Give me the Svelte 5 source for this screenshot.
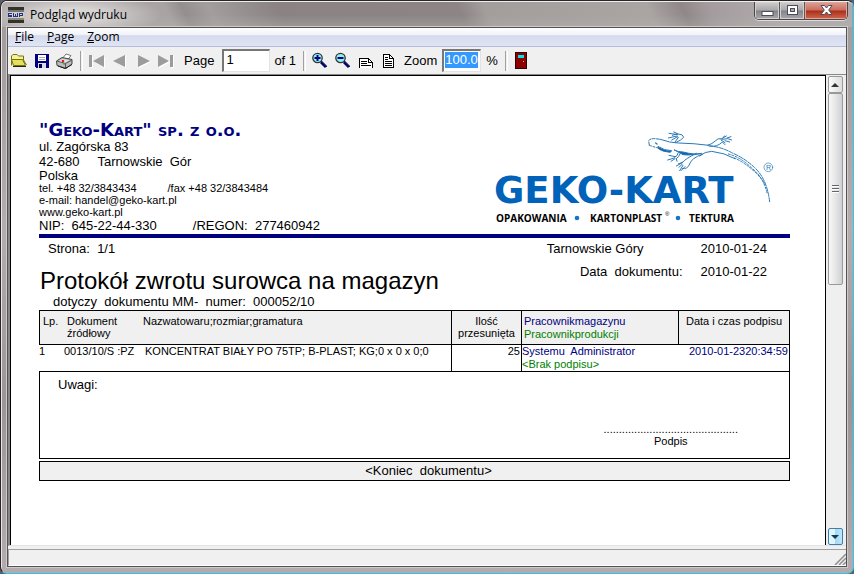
<script>
  let page = $state('1');
  let zoom = $state('100.0');
</script>

<div class="window">
  <header class="titlebar">
    <svg class="appicon" width="16" height="16" viewBox="0 0 16 16" shape-rendering="crispEdges" aria-hidden="true">
      <rect width="16" height="16" fill="#8c8a78" />
      <rect width="16" height="3" fill="#33332b" />
      <rect y="3" width="16" height="2" fill="#77766a" />
      <rect y="5" width="16" height="6" fill="#d2d0bd" />
      <rect y="13" width="16" height="3" fill="#33332b" />
      <path d="M0 6H4V7H1V8H4V10H0V9H3V8.500H0ZM5 6H6V9H7V7H8V9H9V6H10V10H5ZM11 6H15V9H12V10H11ZM12 7V8H14V7Z" fill="#1c2f9c" fill-rule="evenodd" />
    </svg>
    <h1>Podgląd wydruku</h1>
    <div class="caption">
      <button class="min" aria-label="Minimize">
        <svg width="13" height="12" viewBox="0 0 13 12"><rect x="1" y="6.500" width="11" height="4" fill="#fff" stroke="#4b4d5c" /></svg>
      </button>
      <button class="max" aria-label="Maximize">
        <svg width="13" height="12" viewBox="0 0 13 12"><rect x="1.500" y=".5" width="10" height="9" fill="#fff" stroke="#4b4d5c" /><rect x="4.500" y="3.500" width="4" height="3" fill="#a9a9ae" stroke="#4b4d5c" /></svg>
      </button>
      <button class="close" aria-label="Close">
        <svg width="13" height="12" viewBox="0 0 13 12"><path d="M1 .5H4.500L6.500 3L8.500 .5H12L8.700 5L12 9.500H8.500L6.500 7L4.500 9.500H1L4.300 5Z" fill="#fff" stroke="#4b4d5c" /></svg>
      </button>
    </div>
  </header>

  <div class="client">
    <nav class="menu">
      <button><u>F</u>ile</button>
      <button><u>P</u>age</button>
      <button><u>Z</u>oom</button>
    </nav>

    <div class="toolbar">
      <button aria-label="Open">
        <svg width="16" height="16" viewBox="0 0 16 16">
          <path d="M.5 12.500V3L2 1.500H6L7.500 3H12.500V6" fill="#f6f29a" stroke="#77750a" />
          <path d="M2.500 12.500L.5 6.500H11.500L14.500 12.500Z" fill="#e6e060" stroke="#77750a" />
          <path d="M12.500 4V7L15.500 12" fill="none" stroke="#77750a" />
          <path d="M2 13.500H15" stroke="#222" />
        </svg>
      </button>
      <button aria-label="Save">
        <svg width="16" height="16" viewBox="0 0 16 16" shape-rendering="crispEdges">
          <path d="M1 1H15V15H2L1 14Z" fill="#000080" />
          <rect x="4" y="2" width="8" height="6" fill="#fff" />
          <path d="M5 4H11M5 6H11" stroke="#aaa" />
          <rect x="4" y="10" width="8" height="5" fill="#dcdcdc" /><rect x="5" y="11" width="3" height="4" fill="#000050" />
        </svg>
      </button>
      <button aria-label="Print">
        <svg width="17" height="16" viewBox="0 0 17 16">
          <path d="M6 6L10 1L15 2.500L11 8Z" fill="#fff" stroke="#777" />
          <path d="M.5 8L6 4.500L16 6.500V11L10 15.500L1 12.500Z" fill="#bdbdbd" stroke="#444" />
          <path d="M1 8L9.500 10.500L16 7M9.500 10.500V15" fill="none" stroke="#555" />
          <path d="M3 8L7 6L13 7.500L9 9.500Z" fill="#e5e5e5" />
          <circle cx="7" cy="8" r="1.300" fill="#e02020" /><path d="M7 10.500L9 11" stroke="#30b040" stroke-width="1.500" />
          <path d="M2 13L9 15.500L16 11.500" stroke="#222" fill="none" />
        </svg>
      </button>
      <span class="sep"></span>
      <button aria-label="First page">
        <svg width="16" height="14" viewBox="0 0 16 14"><path d="M1 2H3V13H1ZM15 2V13L5 7.500Z" fill="#fff" transform="translate(1 1)" /><path d="M0 1H3V13H0ZM15 1V13L4 7Z" fill="#9c9c9c" /></svg>
      </button>
      <button aria-label="Previous page">
        <svg width="16" height="14" viewBox="0 0 16 14"><path d="M14 2V14L3 8Z" fill="#fff" /><path d="M13 1V13L1 7Z" fill="#9c9c9c" /></svg>
      </button>
      <button aria-label="Next page">
        <svg width="16" height="14" viewBox="0 0 16 14"><path d="M4 2V14L16 8Z" fill="#fff" /><path d="M3 1V13L15 7Z" fill="#9c9c9c" /></svg>
      </button>
      <button aria-label="Last page">
        <svg width="16" height="14" viewBox="0 0 16 14"><path d="M1 2V14L13 8ZM13 2H16V14H13Z" fill="#fff" /><path d="M0 1V13L11 7ZM12 1H15V13H12Z" fill="#9c9c9c" /></svg>
      </button>
      <label class="pagelabel" for="page">Page</label>
      <input id="page" class="pageinput" bind:value={page} />
      <span class="of">of 1</span>
      <span class="sep"></span>
      <button aria-label="Zoom in">
        <svg width="16" height="17" viewBox="0 0 16 17">
          <path d="M9 10L14 15" stroke="#000080" stroke-width="3" /><path d="M9 9L15 15" stroke="#222" />
          <circle cx="5.500" cy="6" r="4.700" fill="#8ff0f4" stroke="#333" stroke-width="1.300" />
          <path d="M2.500 6H8.500M5.500 3V9" stroke="#000080" stroke-width="2" />
        </svg>
      </button>
      <button aria-label="Zoom out">
        <svg width="16" height="17" viewBox="0 0 16 17">
          <path d="M9 10L14 15" stroke="#000080" stroke-width="3" /><path d="M9 9L15 15" stroke="#222" />
          <circle cx="5.500" cy="6" r="4.700" fill="#8ff0f4" stroke="#333" stroke-width="1.300" />
          <path d="M2.500 6H8.500" stroke="#000080" stroke-width="2" />
        </svg>
      </button>
      <button aria-label="Page width">
        <svg width="16" height="16" viewBox="0 0 16 16" shape-rendering="crispEdges">
          <path d="M1.500 15V5.500H10.500L14.500 9.500V15" fill="#fff" stroke="#000" /><path d="M10.500 5.500V9.500H14.500M3 8.500H9M3 10.500H9M3 12.500H13" fill="none" stroke="#000" />
        </svg>
      </button>
      <button aria-label="Full page">
        <svg width="16" height="16" viewBox="0 0 16 16" shape-rendering="crispEdges">
          <path d="M2.500 1.500H8.500L12.500 5.500V14.500H2.500Z" fill="#fff" stroke="#000" /><path d="M8.500 1.500V5.500H12.500M4 4.500H7M4 6.500H7M4 8.500H11M4 10.500H11M4 12.500H11" fill="none" stroke="#000" />
        </svg>
      </button>
      <label class="zoomlabel" for="zoom">Zoom</label>
      <span class="zoombox"><input id="zoom" bind:value={zoom} /></span>
      <span class="pct">%</span>
      <span class="sep"></span>
      <button aria-label="Close preview">
        <svg width="12" height="17" viewBox="0 0 12 17" shape-rendering="crispEdges">
          <rect x=".5" y=".5" width="11" height="16" fill="#8b0000" stroke="#300" />
          <rect x="3" y="3" width="6" height="3" fill="#00e5f0" /><rect x="8" y="9" width="1" height="1" fill="#ffd700" />
        </svg>
      </button>
    </div>

    <div class="viewer">
      <main class="paper">
        <section class="letterhead">
          <address>
            <h2>"Geko-Kart" sp. z o.o.</h2>
            <p>ul. Zagórska 83</p>
            <p class="city"><span>42-680</span><span>Tarnowskie&nbsp; Gór</span></p>
            <p class="country">Polska</p>
            <p class="small pair"><span>tel. +48 32/3843434</span><span>/fax +48 32/3843484</span></p>
            <p class="small">e-mail: handel@geko-kart.pl</p>
            <p class="small">www.geko-kart.pl</p>
            <p class="pair nip"><span>NIP:&nbsp; 645-22-44-330</span><span>/REGON:&nbsp; 277460942</span></p>
          </address>
          <svg class="logo" width="280" height="98" viewBox="0 0 280 98" role="img" aria-label="Geko-Kart">
            <g transform="translate(-13 -8) scale(.33333)" fill="none" stroke="#2a78b4" stroke-width="3" stroke-linecap="round" stroke-linejoin="round">
              <path d="M505 76L503 62Q508 55 522 56L538 58" stroke-dasharray="9 4" />
              <path d="M538 58L566 66L592 69Q640 70 684 76" />
              <path d="M506 76Q520 82 536 84" stroke-dasharray="6 5" />
              <path d="M532 80Q550 92 572 92L568 97Q545 96 532 86ZM580 90Q590 96 606 96Q640 105 662 100L640 104Q618 106 606 104L592 96Z" fill="#0d62b5" />
              <path d="M524 69l4 3" stroke-width="4" />
              <path d="M584 68Q602 60 608 52Q606 42 592 42L578 36M590 44L564 40M588 48L562 54M590 50L572 60M592 52L582 66M586 42L574 46" />
              <path d="M592 98Q590 110 580 112M582 110L564 106M580 114L560 120M582 116L570 124M586 116L588 124M598 100Q594 112 586 116" />
              <path d="M664 102Q630 116 626 132Q620 148 604 146M646 100Q614 116 606 126L592 132M604 128L586 138M604 132L594 142M606 136L596 152M612 140L600 152" />
              <path d="M680 76Q694 72 704 62Q710 54 722 56L736 48M722 58L740 56L752 60M720 60L732 68M726 54L730 48M738 54L750 50M688 78Q708 82 724 66L732 74M732 62L746 66" />
              <path d="M656 108Q672 94 692 94Q730 98 762 116" />
              <path d="M684 78Q720 80 752 98Q790 114 820 142Q858 176 866 246" stroke-dasharray="12 4" />
              <path d="M742 102Q780 112 812 144Q846 170 858 218M760 114Q790 126 826 160Q846 180 852 194" stroke-dasharray="6 5" />
              <circle cx="862" cy="142" r="13" stroke-width="2" />
            </g>
            <text x="272" y="42" class="reg">R</text>
            <text x="0" y="75" class="brand">GEKO-KART</text>
            <text x="2" y="94" class="tag">OPAKOWANIA</text>
            <circle cx="83" cy="90" r="2.300" fill="#1c74c0" />
            <text x="96" y="94" class="tag">KARTONPLAST</text>
            <text x="171" y="88" class="tiny">®</text>
            <circle cx="184" cy="90" r="2.300" fill="#1c74c0" />
            <text x="195" y="94" class="tag">TEKTURA</text>
          </svg>
        </section>

        <section class="heading">
          <div>
            <p class="strona">Strona:&nbsp; 1/1</p>
            <h3>Protokół zwrotu surowca na magazyn</h3>
            <p class="doc">dotyczy&nbsp; dokumentu MM-&nbsp; numer:&nbsp; 000052/10</p>
          </div>
          <dl>
            <dt class="place">Tarnowskie Góry</dt><dd>2010-01-24</dd>
            <dt>Data&nbsp; dokumentu:</dt><dd>2010-01-22</dd>
          </dl>
        </section>

        <table>
          <colgroup><col class="c1" /><col class="c2" /><col /><col class="c4" /><col class="c5" /><col class="c6" /></colgroup>
          <thead>
            <tr>
              <th class="first">Lp.</th>
              <th class="dok">Dokument źródłowy</th>
              <th>Nazwatowaru;rozmiar;gramatura</th>
              <th class="mid line">Ilość przesunięta</th>
              <th class="line people"><span class="blue">Pracownikmagazynu</span><span class="green">Pracownikprodukcji</span></th>
              <th class="mid line last">Data i czas podpisu</th>
            </tr>
          </thead>
          <tbody>
            <tr>
              <td>1</td>
              <td>0013/10/S :PZ</td>
              <td class="name">KONCENTRAT BIAŁY PO 75TP; B-PLAST; KG;0 x 0 x 0;0</td>
              <td class="line right">25</td>
              <td class="line"><span class="blue">Systemu&nbsp; Administrator</span><span class="green">&lt;Brak podpisu&gt;</span></td>
              <td class="right blue last">2010-01-2320:34:59</td>
            </tr>
          </tbody>
        </table>

        <section class="notes">
          <p>Uwagi:</p>
          <div class="sign"><span>............................................</span><span>Podpis</span></div>
        </section>
        <footer class="end">&lt;Koniec&nbsp; dokumentu&gt;</footer>
      </main>

      <div class="scroll">
        <button class="up" aria-label="Scroll up"><svg width="8" height="4" viewBox="0 0 8 4"><path d="M0 4L4 0L8 4Z" fill="#333" /></svg></button>
        <div class="thumb"><i></i><i></i><i></i></div>
        <button class="down" aria-label="Scroll down"><svg width="8" height="4" viewBox="0 0 8 4"><path d="M0 0L4 4L8 0Z" fill="#123c5c" /></svg></button>
      </div>
    </div>

    <div class="status">
      <svg width="12" height="12" viewBox="0 0 12 12" aria-hidden="true"><path d="M1 12L12 1M5 12L12 5M9 12L12 9" stroke="#8e8e8e" stroke-width="1.500" /></svg>
    </div>
  </div>
</div>

<style>
  :global(body) { margin: 0; background: #59606a; }
  * { box-sizing: border-box; }
  p, h1, h2, h3, dl, dd { margin: 0; font-weight: normal; }
  button { border: 0; padding: 0; background: none; font: inherit; color: inherit; display: flex; align-items: center; justify-content: center; }
  .window {
    height: 100vh; min-height: 500px; display: flex; flex-direction: column;
    padding: 0 6px 6px; border: 1px solid #2a2527; border-right-color: #2cc8ee; border-bottom-color: #2cc8ee;
    border-radius: 7px; box-shadow: inset 1px 1px 0 #e9e4e6;
    background: linear-gradient(#a19a9b, #b4acae 40%, #9c9496 70%, #b3abad);
    font-family: "Liberation Sans", Arial, sans-serif; font-size: 13px; color: #000;
  }
  .titlebar {
    height: 26px; flex: none; display: flex; align-items: center; gap: 6px; margin: 0 -5px; padding-left: 6px;
    background:
      radial-gradient(ellipse 90px 22px at 70px 13px, #d8d5d5 30%, transparent),
      linear-gradient(#fff0 50%, #b4b4b066),
      linear-gradient(65deg, #a9a3a4 20%, #948e8f 22%, #a39d9d 25%, #8a8283 33%, #8c8485 54%, #a39d9c 57%, #aaa4a3 76%, #8f8788 80%, #a39b9d 83%, #b0a9ab 90%);
    border-radius: 5px 5px 0 0; border-top: 1px solid #eee;
  }
  h1 { font: 12px/16px "Open Sans", "Noto Sans", sans-serif; flex: 1; }
  .caption { align-self: flex-start; display: flex; height: 18px; margin-right: 4px; border: 1px solid #4a4748; border-top: 0; border-radius: 0 0 5px 5px; overflow: hidden; box-shadow: 0 1px 0 #ddd; }
  .caption button { width: 25px; background: linear-gradient(#d0cdce, #aaa7a8 48%, #84838a 52%, #a9a7aa); box-shadow: inset 0 0 0 1px #d4d0d2; border-right: 1px solid #5a5758; }
  .caption .close { width: 42px; border: 0; background: linear-gradient(#dda297, #cb6d5e 48%, #a92e1a 52%, #d2694e); box-shadow: inset 0 0 0 1px #e0a598; }
  .client { flex: 1; min-height: 0; display: flex; flex-direction: column; border: 1px solid #555052; background: #f0f0f0; box-shadow: 0 0 0 1px #cfcacb; }
  .menu { height: 19px; flex: none; display: flex; align-items: center; gap: 13px; padding-left: 7px; border-bottom: 1px solid #b5bcd8; background: linear-gradient(#fff, #eef1f8 40%, #d5dbee 42%, #e0e5f4); font: 12px/16px "Open Sans", "Noto Sans", sans-serif; }
  .toolbar { height: 27px; flex: none; display: flex; align-items: center; margin-left: -1px; }
  .toolbar button { width: 23px; height: 23px; flex: none; }
  .toolbar svg { flex: none; }
  .sep { width: 3px; height: 20px; border-left: 1px solid #a0a0a0; border-right: 1px solid #fff; margin: 0 2px 0 4px; }
  .pagelabel { margin: 0 8px 0 7px; }
  .of { margin: 0 3px 0 4px; }
  input { font: 13px/16px "Liberation Sans", Arial, sans-serif; border: 0; padding: 0; outline: 0; border-radius: 0; }
  .pageinput { width: 48px; height: 23px; padding: 0 2px 3px; border: 1px solid #e3e3e3; border-top: 2px solid #777; border-left: 2px solid #777; background: #fff; }
  .zoomlabel { margin: 0 5px 0 4px; }
  .zoombox { width: 39px; height: 23px; padding: 1px 2px 2px 1px; border: 1px solid #e3e3e3; border-top: 2px solid #777; border-left: 2px solid #777; background: #fff; display: flex; align-items: flex-start; }
  .zoombox input { width: 100%; height: 16px; background: #3399ff; color: #fff; }
  .pct { margin: 0 3px 0 5px; }

  .viewer { flex: 1; min-height: 0; display: flex; border: 0 solid #888; border-width: 1px 0 0 2px; border-bottom: 1px solid #e3e3e3; }
  .paper { flex: 1; min-width: 0; overflow: hidden; background: #fff; border: 1px solid #000; border-bottom: 0; padding: 44px 35px 0 28px; }
  .letterhead { display: flex; justify-content: space-between; border-bottom: 4px solid #000080; height: 118px; }
  address { font-style: normal; white-space: nowrap; line-height: 15px; }
  h2 { font: bold small-caps 18px/19px "DejaVu Sans", sans-serif; color: #000080; }
  .city, .pair { display: flex; gap: 18px; }
  .country { line-height: 13px; }
  .small { font-size: 11px; line-height: 12px; }
  .small.pair { gap: 31px; }
  .nip { gap: 36px; }
  .logo { flex: none; margin: 8px 16px 0 0; }
  .brand { font: bold 37px "DejaVu Sans", sans-serif; fill: #0062b8; }
  .tag { font: bold 10px "Open Sans", sans-serif; }
  .tiny { font: 6px "Liberation Sans", sans-serif; }
  .reg { font: 7px "Liberation Sans", sans-serif; fill: #2a78b4; }
  .heading { display: flex; justify-content: space-between; height: 72px; white-space: nowrap; }
  .strona { padding: 3px 0 0 9px; line-height: 16px; }
  h3 { font-size: 24px; line-height: 28px; padding: 10px 0 0 1px; }
  .doc { padding-left: 14px; line-height: 14px; }
  dl { display: grid; grid-template-columns: auto auto; gap: 7px 18px; align-content: start; line-height: 16px; padding: 3px 23px 0 0; }
  dt { text-align: right; }
  .place { padding-right: 39px; }

  table { width: 100%; table-layout: fixed; border-collapse: separate; border-spacing: 0; font-size: 11px; line-height: 12px; white-space: nowrap; }
  .c1 { width: 25px; } .c2 { width: 76px; } .c4 { width: 70px; } .c5 { width: 157px; } .c6 { width: 112px; }
  th, td { padding: 0; text-align: left; vertical-align: top; font-weight: normal; }
  th { height: 35px; padding: 4px 3px 0; border: solid #000; border-width: 1px 0; background: #f0f0f0; }
  td { height: 26px; }
  th.first { border-left: 1px solid #000; }
  th.line, td.line { border-left: 1px solid #000; }
  th.last, td.last { border-right: 1px solid #000; }
  th.mid { text-align: center; white-space: normal; }
  th.people { padding-left: 2px; }
  th.dok { white-space: normal; }
  td.right { text-align: right; padding-right: 1px; }
  td.name { padding-left: 5px; }
  td span, th .blue, th .green { display: block; line-height: 13px; }
  .blue { color: #000080; }
  .green { color: #008000; }
  .notes { height: 88px; border: 1px solid #000; display: flex; flex-direction: column; justify-content: space-between; padding: 5px 51px 11px 18px; line-height: 16px; }
  .sign { align-self: flex-end; display: flex; flex-direction: column; align-items: center; font-size: 11px; line-height: 12px; }
  .end { height: 20px; margin-top: 2px; border: 1px solid #000; background: #f0f0f0; text-align: center; padding-left: 28px; line-height: 18px; }

  .scroll { width: 20px; flex: none; display: flex; flex-direction: column; align-items: center; padding: 1px 3px 0 1px; background: #efefef; }
  .scroll button { width: 15px; height: 17px; flex: none; border: 1px solid #999; border-radius: 2px; background: linear-gradient(90deg, #fafafa, #ddd); }
  .scroll .down { margin-top: auto; border-color: #3c7fb1; background: linear-gradient(90deg, #e3f4fc 45%, #a5d9f3 50%, #bfe5f8); }
  .thumb { width: 15px; height: 192px; flex: none; border: 1px solid #999; border-radius: 2px; background: linear-gradient(90deg, #f8f8f8, #e8e8e9 45%, #cfd0d3); display: flex; flex-direction: column; align-items: center; justify-content: center; gap: 1px; }
  .thumb i { width: 7px; height: 2px; background: #666; border-bottom: 1px solid #fff; }
  .status { height: 17px; flex: none; margin-top: 3px; border-top: 1px solid #a0a0a0; border-left: 1px solid #a0a0a0; border-bottom: 1px solid #fff; display: flex; align-items: flex-end; justify-content: flex-end; }
</style>
